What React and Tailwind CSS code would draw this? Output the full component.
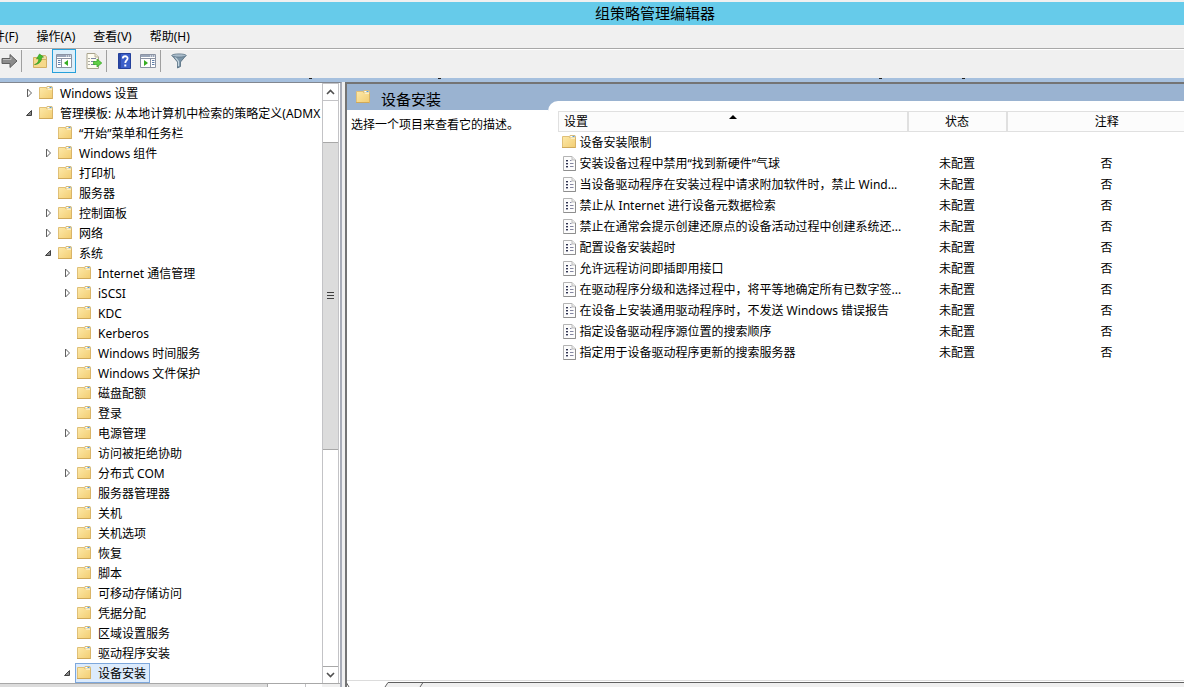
import { Fragment } from 'react';

const INDENT = ['pl-6', 'pl-[43px]', 'pl-[62px]'];

const MENUS = ['文件(F)', '操作(A)', '查看(V)', '帮助(H)'];

const TREE = [
    { level: 0, name: 'Windows 设置', arrow: 'closed' },
    { level: 0, name: '管理模板: 从本地计算机中检索的策略定义(ADMX', arrow: 'open' },
    { level: 1, name: '“开始”菜单和任务栏' },
    { level: 1, name: 'Windows 组件', arrow: 'closed' },
    { level: 1, name: '打印机' },
    { level: 1, name: '服务器' },
    { level: 1, name: '控制面板', arrow: 'closed' },
    { level: 1, name: '网络', arrow: 'closed' },
    { level: 1, name: '系统', arrow: 'open' },
    { level: 2, name: 'Internet 通信管理', arrow: 'closed' },
    { level: 2, name: 'iSCSI', arrow: 'closed' },
    { level: 2, name: 'KDC' },
    { level: 2, name: 'Kerberos' },
    { level: 2, name: 'Windows 时间服务', arrow: 'closed' },
    { level: 2, name: 'Windows 文件保护' },
    { level: 2, name: '磁盘配额' },
    { level: 2, name: '登录' },
    { level: 2, name: '电源管理', arrow: 'closed' },
    { level: 2, name: '访问被拒绝协助' },
    { level: 2, name: '分布式 COM', arrow: 'closed' },
    { level: 2, name: '服务器管理器' },
    { level: 2, name: '关机' },
    { level: 2, name: '关机选项' },
    { level: 2, name: '恢复' },
    { level: 2, name: '脚本' },
    { level: 2, name: '可移动存储访问' },
    { level: 2, name: '凭据分配' },
    { level: 2, name: '区域设置服务' },
    { level: 2, name: '驱动程序安装' },
    { level: 2, name: '设备安装', arrow: 'open', selected: true },
];

const POLICIES = [
    '安装设备过程中禁用“找到新硬件”气球',
    '当设备驱动程序在安装过程中请求附加软件时，禁止 Wind...',
    '禁止从 Internet 进行设备元数据检索',
    '禁止在通常会提示创建还原点的设备活动过程中创建系统还...',
    '配置设备安装超时',
    '允许远程访问即插即用接口',
    '在驱动程序分级和选择过程中，将平等地确定所有已数字签...',
    '在设备上安装通用驱动程序时，不发送 Windows 错误报告',
    '指定设备驱动程序源位置的搜索顺序',
    '指定用于设备驱动程序更新的搜索服务器',
];

function FolderIcon() {
    return (
        <svg width="15" height="14" viewBox="0 0 15 14" className="shrink-0" aria-hidden="true">
            <defs>
                <linearGradient id="folder" x1="0" y1="0" x2="1" y2="1">
                    <stop offset="0" stopColor="#fde9a9" />
                    <stop offset="1" stopColor="#f2cd72" />
                </linearGradient>
            </defs>
            <path d="M7 3.5L8 .5H13L13.5 2V5H7Z" fill="#f0dca6" stroke="#d6bc7d" />
            <path d="M8.5 1.5H12.5" stroke="#fff" />
            <path d="M10.5 1.5H12.5" stroke="#4f9be0" />
            <path d="M.5 1.5H7L8.5 3.5H13.5V12.5H.5Z" fill="url(#folder)" stroke="#e0c078" />
            <path d="M8.5 3.5H13.5" stroke="#fbeec4" />
            <path d="M0 12.5H14" stroke="#cfa95a" />
            <path d="M13.5 3V13" stroke="#d9b468" />
        </svg>
    );
}

function PolicyIcon() {
    return (
        <svg width="13" height="15" viewBox="0 0 13 15" className="shrink-0" aria-hidden="true">
            <path d="M.5 .5H9L12.5 4V14.5H.5Z" fill="#fcfcfc" stroke="#b4b4b4" />
            <path d="M9 .5V4H12.5" fill="#e8e8e8" stroke="#bdbdbd" />
            <path d="M3 4.5H5M3 7.5H5M3 10.5H5" stroke="#30344e" />
            <path d="M3 5.5H5M3 8.5H5M3 11.5H5" stroke="#a6a8ba" />
            <path d="M7 4.5H8.5M7 7.5H10.5M7 10.5H10.5" stroke="#8486a0" />
            <path d="M.5 14.5H12.5V4" fill="none" stroke="#8e8e8e" />
        </svg>
    );
}

function TreeArrow({ state }) {
    return (
        <svg width="10" height="10" viewBox="0 0 10 10" className="shrink-0" aria-hidden="true">
            {state === 'closed' && <path d="M3.5 1L7.5 5L3.5 9Z" fill="#fff" stroke="#606060" />}
            {state === 'open' && <path d="M7.5 2.5V7.5H2.5Z" fill="#8a8a8a" stroke="#404040" />}
        </svg>
    );
}

function ForwardIcon() {
    return (
        <svg width="17" height="16" viewBox="0 0 17 16" aria-hidden="true">
            <path d="M1 5.5H9V1.5L16 8L9 14.5V10.5H1Z" fill="#8b8b8b" stroke="#5f5f5f" />
            <path d="M2 6.5H10V4" fill="none" stroke="#b9b9b9" />
        </svg>
    );
}

function UpIcon() {
    return (
        <svg width="16" height="16" viewBox="0 0 16 16" aria-hidden="true">
            <path d="M8.5 5L9.5 2.5H13.5L14.5 4V8H8Z" fill="#f0dca6" stroke="#cdb06a" />
            <path d="M1.5 4.5H7L8.5 6.5H14.5V14.5H1.5Z" fill="#f6d98a" stroke="#d3b064" />
            <path d="M2.5 11.5C6 10.5 7 8 6.5 5.5L4.5 6L7.5 1L11.5 4L9.5 4.5C10 8 7 11.5 2.5 11.5Z" fill="#43bd2c" stroke="#2c8f1c" strokeWidth=".6" />
        </svg>
    );
}

function PaneIcon({ flip }) {
    return (
        <svg width="16" height="14" viewBox="0 0 16 14" aria-hidden="true">
            <path d="M.5 .5H15.5V13.5H.5Z" fill="#fff" stroke="#8b93a3" />
            <path d="M1 1H15V3H1Z" fill="#9aa5b8" />
            <path d="M10 2H11M12 2H13M14 2H15" stroke="#fff" />
            <path d="M1 4.5H15" stroke="#8b93a3" />
            {flip ? (
                <g>
                    <path d="M10.5 5V13" stroke="#8b93a3" />
                    <path d="M12 6.5H14.5M12 8.5H14.5M12 10.5H14.5" stroke="#5f7da8" />
                    <path d="M4 6L8 9L4 12Z" fill="#36ad22" />
                </g>
            ) : (
                <g>
                    <path d="M5.5 5V13" stroke="#8b93a3" />
                    <path d="M2 6.5H4.5M2 8.5H4.5M2 10.5H4.5" stroke="#5f7da8" />
                    <path d="M12 6L8 9L12 12Z" fill="#36ad22" />
                </g>
            )}
        </svg>
    );
}

function ExportIcon() {
    return (
        <svg width="16" height="16" viewBox="0 0 16 16" aria-hidden="true">
            <path d="M1 .5H9L12.5 4V15.5H1Z" fill="#fffdf2" stroke="#a9a38c" />
            <path d="M9 .5V4H12.5" fill="#eee9d2" stroke="#b9b39c" />
            <path d="M2.5 5.5H3.5M2.5 8.5H3.5M2.5 11.5H3.5" stroke="#555" />
            <path d="M5 5.5H10M5 8.5H9M5 11.5H9" stroke="#7c86a4" />
            <path d="M7.5 8.5H11V6L15.8 10L11 14V11.5H7.5Z" fill="#61cf45" stroke="#32a31f" strokeWidth=".7" />
        </svg>
    );
}

function HelpIcon() {
    return (
        <svg width="13" height="16" viewBox="0 0 13 16" aria-hidden="true">
            <path d="M.5 .5H12.5V15.5H.5Z" fill="#3b5fc9" stroke="#24409b" />
            <path d="M1 1H3V15H1Z" fill="#2b47a4" />
            <path d="M4.8 5.5C4.8 2.5 9.8 2.5 9.6 5.5C9.5 7.5 7.3 7.4 7.3 10" fill="none" stroke="#fff" strokeWidth="1.8" />
            <path d="M6.3 11.5H8.3V13.5H6.3Z" fill="#fff" />
        </svg>
    );
}

function FilterIcon() {
    return (
        <svg width="16" height="16" viewBox="0 0 16 16" aria-hidden="true">
            <path d="M1 2.5L6.5 9V15L9.5 13.5V9L15 2.5Z" fill="#7c95a8" stroke="#50697c" strokeWidth=".8" />
            <path d="M4 4L7.5 8.5V13" fill="none" stroke="#c6d6e0" strokeWidth="1.2" />
            <ellipse cx="8" cy="2.5" rx="7.2" ry="1.6" fill="#a9bccb" stroke="#5f7688" strokeWidth=".8" />
        </svg>
    );
}

function ToolButton({ label, active, children }) {
    return (
        <button
            aria-label={label}
            className={`flex h-6 w-6 shrink-0 items-center justify-center border ${active ? 'border-[#26a0da] bg-[#dceffa]' : 'border-transparent'}`}
        >
            {children}
        </button>
    );
}

function Separator() {
    return <div className="h-[22px] w-px shrink-0 bg-[#a0a0a0]" />;
}

function ScrollButton({ label, path, className }) {
    return (
        <button aria-label={label} className={`flex shrink-0 items-center justify-center bg-white ${className}`}>
            <svg width="9" height="6" viewBox="0 0 9 6" aria-hidden="true">
                <path d={path} fill="none" stroke="#505050" strokeWidth="1.6" />
            </svg>
        </button>
    );
}

function TreeScrollbar() {
    return (
        <div className="mr-px flex w-[17px] shrink-0 flex-col border-x border-[#c3c3c6] bg-white">
            <ScrollButton label="向上滚动" path="M1 5L4.5 1.5L8 5" className="h-[18px] border-y border-[#c3c3c6]" />
            <div className="flex min-h-0 flex-1 flex-col">
                <div className="flex-[41]" />
                <div className="flex flex-[308] flex-col items-center justify-center gap-[2px] border-y border-[#a8a8a8] bg-[#dcdcdc]">
                    <span className="h-px w-[7px] bg-[#404040]" />
                    <span className="h-px w-[7px] bg-[#404040]" />
                    <span className="h-px w-[7px] bg-[#404040]" />
                </div>
                <div className="flex-[217]" />
            </div>
            <ScrollButton label="向下滚动" path="M1 1L4.5 4.5L8 1" className="h-[17px] border-t border-[#a8a8a8]" />
        </div>
    );
}

function TreePane() {
    return (
        <div className="flex w-[342px] shrink-0 flex-col border-t border-r-2 border-t-[#828790] border-r-[#a9adb9] bg-white">
            <div className="flex min-h-0 flex-1">
                <ul role="tree" className="min-w-0 flex-1 overflow-hidden">
                    {TREE.map((node) => (
                        <li
                            key={node.name}
                            role="treeitem"
                            aria-level={node.level + 1}
                            aria-selected={!!node.selected}
                            className={`flex h-5 items-center whitespace-nowrap ${INDENT[node.level]}`}
                        >
                            <TreeArrow state={node.arrow} />
                            <span
                                className={`ml-[3px] flex h-5 items-center gap-[6px] border px-px pr-[3px] ${node.selected ? 'border-[#7da7dc] bg-[#dcebfc]' : 'border-transparent'}`}
                            >
                                <FolderIcon />
                                <span className="pt-[2px]">{node.name}</span>
                            </span>
                        </li>
                    ))}
                </ul>
                <TreeScrollbar />
            </div>
            {/* top edge of the horizontal scrollbar */}
            <div className="flex h-1 shrink-0 border-t border-[#a8a8a8]">
                <div className="w-[268px] border-r border-[#a8a8a8] bg-[#dcdcdc]" />
                <div className="flex-1 border-r border-[#c3c3c6]" />
                <div className="w-4" />
                <div className="w-[18px] bg-[#f0f0f0]" />
            </div>
        </div>
    );
}

function PolicyTable() {
    return (
        <table className="w-[648px] table-fixed border-collapse whitespace-nowrap">
            <colgroup>
                <col className="w-[349px]" />
                <col className="w-[99px]" />
                <col className="w-[200px]" />
            </colgroup>
            <thead>
                <tr className="h-5 border border-[#e0e0e0] bg-[#fcfcfc]">
                    <th className="relative border-r-2 border-[#e0e0e0] p-0 pl-[5px] text-left font-normal">
                        设置
                        <svg width="8" height="4" viewBox="0 0 8 4" className="absolute top-[3px] left-1/2 -translate-x-1/2" aria-hidden="true">
                            <path d="M4 0L8 4H0Z" fill="#000" />
                        </svg>
                    </th>
                    <th className="border-r-2 border-[#e0e0e0] p-0 text-center font-normal">状态</th>
                    <th className="p-0 text-center font-normal">注释</th>
                </tr>
            </thead>
            <tbody>
                <tr className="h-[21px]">
                    <td className="p-0 pl-[3px]">
                        <div className="flex items-center gap-[3px]">
                            <FolderIcon />
                            <span className="pt-[2px]">设备安装限制</span>
                        </div>
                    </td>
                    <td />
                    <td />
                </tr>
                {POLICIES.map((name) => (
                    <tr key={name} className="h-[21px]">
                        <td className="p-0 pl-1">
                            <div className="flex items-center gap-1">
                                <PolicyIcon />
                                <span className="pt-[2px]">{name}</span>
                            </div>
                        </td>
                        <td className="p-0 pt-[2px] text-center">未配置</td>
                        <td className="p-0 pt-[2px] text-center">否</td>
                    </tr>
                ))}
            </tbody>
        </table>
    );
}

function DetailPane() {
    return (
        <div className="flex min-w-0 flex-1 flex-col border-t-2 border-l-2 border-[#747474] bg-white">
            <div className="flex min-h-0 flex-1 border-b border-[#dcdcdc]">
                <section className="w-[201px] shrink-0">
                    <h1 className="flex h-[26px] items-center gap-[10px] bg-[#9ab3d1] pl-[9px] text-[15px]">
                        <FolderIcon />
                        <span className="pt-1">设备安装</span>
                    </h1>
                    <p className="pt-[7px] pl-1">选择一个项目来查看它的描述。</p>
                </section>
                <section className="flex min-w-0 flex-1 bg-[#9ab3d1] pt-[17px]">
                    <div className="min-w-0 flex-1 overflow-hidden rounded-tl-[10px] bg-white pt-[10px] pl-[10px]">
                        <PolicyTable />
                    </div>
                </section>
            </div>
            {/* upper edge of the view tabs */}
            <div className="flex h-[6px] shrink-0">
                <svg width="80" height="6" viewBox="0 0 80 6" className="shrink-0" aria-hidden="true">
                    <path d="M38 6L41 1.5H80V6Z" fill="#f0f0f0" />
                    <path d="M-1 1L2 6M38 6L41 1.5H80M73 6L76 1.5" fill="none" stroke="#606060" />
                </svg>
                <div className="mt-px flex-1 border-t border-[#606060] bg-[#f0f0f0]" />
            </div>
        </div>
    );
}

export default function App() {
    return (
        <div className="flex h-screen flex-col overflow-hidden bg-[#f0f0f0] font-['Noto_Sans','Noto_Sans_CJK_SC',sans-serif] text-[12px] leading-4 text-black">
            <header className="mt-[2px] h-[23px] shrink-0 bg-[#66cbea] pl-[126px] text-center text-[15px] leading-[23px]">
                组策略管理编辑器
            </header>

            <nav className="-ml-[27px] flex h-[23px] shrink-0 items-center gap-[2px]">
                {MENUS.map((menu) => (
                    <button key={menu} className="h-[23px] shrink-0 px-2">
                        {menu}
                    </button>
                ))}
            </nav>

            {/* Toolbar */}
            <div className="flex h-[30px] shrink-0 items-center border-t border-[#a8a8a8] pb-[5px] shadow-[inset_0_1px_0_#fff]">
                <div className="-ml-[3px] flex items-center">
                    <ToolButton label="前进"><ForwardIcon /></ToolButton>
                </div>
                <Separator />
                <div className="flex items-center pl-[6px]">
                    <ToolButton label="向上一级"><UpIcon /></ToolButton>
                    <ToolButton label="显示/隐藏控制台树" active><PaneIcon /></ToolButton>
                    <div className="pl-[6px]">
                        <ToolButton label="导出列表"><ExportIcon /></ToolButton>
                    </div>
                </div>
                <Separator />
                <div className="flex items-center pl-[5px]">
                    <ToolButton label="帮助"><HelpIcon /></ToolButton>
                    <ToolButton label="显示/隐藏操作窗格"><PaneIcon flip /></ToolButton>
                </div>
                <Separator />
                <div className="pl-[6px]">
                    <ToolButton label="筛选器"><FilterIcon /></ToolButton>
                </div>
            </div>

            {/* Strip above the panes */}
            <div className="flex h-1 shrink-0 bg-[#a6c0de]">
                {['w-[309px]', 'w-[126px]', 'w-[438px]', 'w-[80px]'].map((gap) => (
                    <Fragment key={gap}>
                        <span className={`shrink-0 ${gap}`} />
                        <span className="h-px w-[3px] shrink-0 bg-[#202020]" />
                    </Fragment>
                ))}
            </div>

            <main className="flex min-h-0 flex-1 gap-[3px]">
                <TreePane />
                <DetailPane />
            </main>
        </div>
    );
}
